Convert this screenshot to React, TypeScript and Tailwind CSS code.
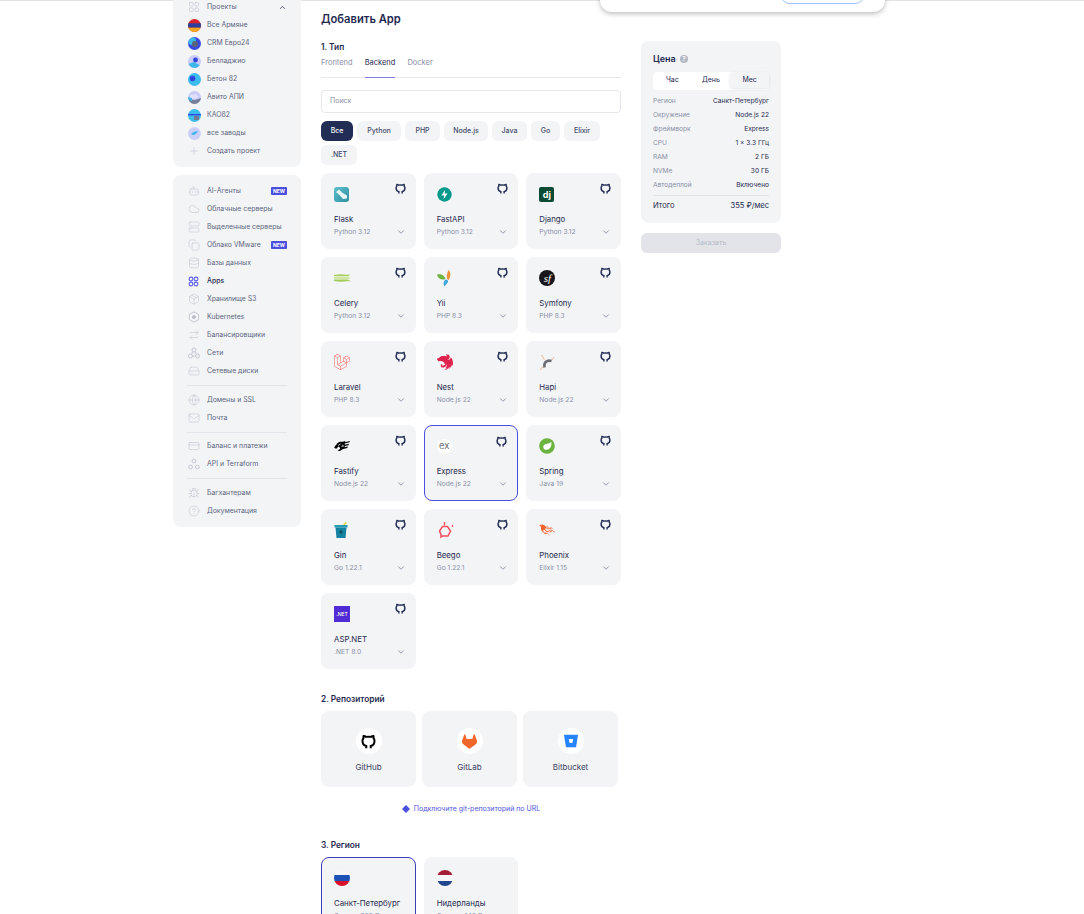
import { ReactNode } from "react";
import {
  Bot,
  ChevronDown,
  ChevronUp,
  Cloud,
  Copy,
  CreditCard,
  Database,
  ArrowRightLeft,
  Globe,
  HardDrive,
  LayoutGrid,
  Mail,
  Package,
  Plus,
  Server,
  Bug,
  CircleHelp,
} from "lucide-react";
import { SiBitbucket, SiFastify, SiGitlab, SiLaravel, SiNestjs, SiPhoenixframework } from "react-icons/si";

function GithubMark({ size, color, className }: { size: number; color: string; className?: string }) {
  return (
    <svg width={size} height={size} viewBox="0 0 12 12" fill="none" stroke={color} strokeWidth="1.6" className={className}>
      <path d="M4.2 11.4V9.5c-.9-.2-3-1-3-4 0-.9.3-1.6.8-2.2-.1-.5-.1-1.2.1-1.8.8 0 1.6.5 2 .8.5-.1 1.2-.2 1.9-.2s1.4.1 1.9.2c.4-.3 1.2-.8 2-.8.2.6.2 1.3.1 1.8.5.6.8 1.3.8 2.2 0 3-2.1 3.8-3 4v1.9" />
    </svg>
  );
}

function Avatar({ bg, children }: { bg: string; children?: ReactNode }) {
  return (
    <svg width="13" height="13" viewBox="0 0 13 13" className="shrink-0">
      <clipPath id={`av-${bg.slice(1)}`}>
        <circle cx="6.5" cy="6.5" r="6.5" />
      </clipPath>
      <g clipPath={`url(#av-${bg.slice(1)})`}>
        <rect width="13" height="13" fill={bg} />
        {children}
      </g>
    </svg>
  );
}

const projects = [
  {
    name: "Все Армяне",
    icon: (
      <Avatar bg="#d9232e">
        <rect y="4.3" width="13" height="4.4" fill="#2b3f9e" />
        <rect y="8.7" width="13" height="4.3" fill="#f2a81d" />
      </Avatar>
    ),
  },
  {
    name: "CRM Евро24",
    icon: (
      <Avatar bg="#3b49e0">
        <circle cx="4" cy="4" r="4" fill="#39b7e8" />
        <circle cx="7" cy="7" r="3" fill="#5b6478" />
      </Avatar>
    ),
  },
  {
    name: "Белладжио",
    icon: (
      <Avatar bg="#c9ccf7">
        <circle cx="7.5" cy="5" r="2.4" fill="#3146e0" />
        <path d="M0 9l6-2 7 4v2H0z" fill="#3fb6ea" />
      </Avatar>
    ),
  },
  {
    name: "Бетон 82",
    icon: (
      <Avatar bg="#3cbcec">
        <circle cx="4.5" cy="5.5" r="2.8" fill="#3146e0" />
      </Avatar>
    ),
  },
  {
    name: "Авито АПИ",
    icon: (
      <Avatar bg="#c9ccf7">
        <path d="M2 4l6-1 3 3-5 2-4 1z" fill="#dfe1fb" />
        <path d="M1 8l6 1 6-2v6H1z" fill="#77809a" />
        <path d="M0 6l4 1v3L0 9z" fill="#3fb6ea" />
      </Avatar>
    ),
  },
  {
    name: "КАО82",
    icon: (
      <Avatar bg="#3cbcec">
        <rect y="5" width="13" height="1.4" fill="#3146e0" />
        <rect x="6" y="7" width="5" height="4" fill="#707a90" />
      </Avatar>
    ),
  },
  {
    name: "все заводы",
    icon: (
      <Avatar bg="#ccd0f8">
        <path d="M3 7c2-2 4-3 7-3-1 2-3 4-5 4z" fill="#3fb6ea" />
      </Avatar>
    ),
  },
];

function AppsIcon() {
  return (
    <svg width="11" height="11" viewBox="0 0 11 11" fill="none" stroke="#5b5fe8" strokeWidth="1.1">
      <circle cx="3" cy="3" r="1.9" />
      <circle cx="8" cy="3" r="1.9" />
      <circle cx="3" cy="8" r="1.9" />
      <circle cx="8" cy="8" r="1.9" />
    </svg>
  );
}

function KubeIcon() {
  return (
    <svg width="12" height="12" viewBox="0 0 12 12" fill="none" stroke="#babec9" strokeWidth="0.8">
      <path d="M6 .8l4.6 2.6v5.2L6 11.2 1.4 8.6V3.4z" />
      <circle cx="6" cy="6" r="1.6" fill="#babec9" />
    </svg>
  );
}

function NetworkIcon() {
  return (
    <svg width="12" height="12" viewBox="0 0 12 12" fill="none" stroke="#babec9" strokeWidth="0.8">
      <circle cx="6" cy="3" r="2" />
      <circle cx="2.5" cy="9" r="2" />
      <circle cx="9.5" cy="9" r="2" />
      <path d="M4.6 9h2.8M5 4.7L3.5 7.3M7 4.7l1.5 2.6" />
    </svg>
  );
}

function TreeIcon() {
  return (
    <svg width="12" height="12" viewBox="0 0 12 12" fill="none" stroke="#babec9" strokeWidth="0.8">
      <circle cx="6" cy="3" r="1.9" />
      <circle cx="2.6" cy="9" r="1.9" />
      <circle cx="9.4" cy="9" r="1.9" />
    </svg>
  );
}

const ic = { size: 12, strokeWidth: 1, color: "#babec9" };

type NavItem = { name: string; icon: ReactNode; isNew?: boolean; active?: boolean };

const servicesTop: NavItem[] = [
  { name: "AI-Агенты", icon: <Bot {...ic} />, isNew: true },
  { name: "Облачные серверы", icon: <Cloud {...ic} /> },
  { name: "Выделенные серверы", icon: <Server {...ic} /> },
  { name: "Облако VMware", icon: <Copy {...ic} />, isNew: true },
  { name: "Базы данных", icon: <Database {...ic} /> },
  { name: "Apps", icon: <AppsIcon />, active: true },
  { name: "Хранилище S3", icon: <Package {...ic} /> },
  { name: "Kubernetes", icon: <KubeIcon /> },
  { name: "Балансировщики", icon: <ArrowRightLeft {...ic} /> },
  { name: "Сети", icon: <NetworkIcon /> },
  { name: "Сетевые диски", icon: <HardDrive {...ic} /> },
];
const servicesDomains: NavItem[] = [
  { name: "Домены и SSL", icon: <Globe {...ic} /> },
  { name: "Почта", icon: <Mail {...ic} /> },
];
const servicesBilling: NavItem[] = [
  { name: "Баланс и платежи", icon: <CreditCard {...ic} /> },
  { name: "API и Terraform", icon: <TreeIcon /> },
];
const servicesHelp: NavItem[] = [
  { name: "Багхантерам", icon: <Bug {...ic} /> },
  { name: "Документация", icon: <CircleHelp {...ic} /> },
];

function NavRow({ icon, children, right }: { icon: ReactNode; children: ReactNode; right?: ReactNode }) {
  return (
    <div className="flex h-[18px] items-center">
      <div className="flex w-[20px] shrink-0 items-center pl-px">{icon}</div>
      <span className="flex-1 truncate">{children}</span>
      {right}
    </div>
  );
}

function ServiceRows({ items }: { items: NavItem[] }) {
  return (
    <>
      {items.map((s) => (
        <NavRow
          key={s.name}
          icon={s.icon}
          right={
            s.isNew ? (
              <span className="rounded-[1px] bg-[#4a4fe0] px-[2px] text-[5px] font-bold leading-[8px] text-white">
                NEW
              </span>
            ) : undefined
          }
        >
          <span className={s.active ? "font-medium text-[#1f2a50]" : ""}>{s.name}</span>
        </NavRow>
      ))}
    </>
  );
}

function Sidebar() {
  return (
    <aside className="-mt-[12px] flex w-[128px] shrink-0 flex-col gap-2 text-[6.9px] text-[#5d6580]">
      <div className="rounded-b-lg bg-[#f3f4f6] px-[14px] pb-[7px] pt-[9px]">
        <NavRow
          icon={<LayoutGrid size={12} strokeWidth={1} color="#babec9" />}
          right={<ChevronUp size={9} strokeWidth={2} color="#2b3252" />}
        >
          Проекты
        </NavRow>
        {projects.map((p) => (
          <NavRow key={p.name} icon={p.icon}>
            {p.name}
          </NavRow>
        ))}
        <NavRow icon={<Plus size={12} strokeWidth={1} color="#babec9" />}>Создать проект</NavRow>
      </div>
      <div className="rounded-lg bg-[#f3f4f6] px-[14px] pb-[7px] pt-[7px]">
        <ServiceRows items={servicesTop} />
        <div className="my-[5px] h-px bg-[#e3e5ea]" />
        <ServiceRows items={servicesDomains} />
        <div className="mb-[4px] mt-[5px] h-px bg-[#e3e5ea]" />
        <ServiceRows items={servicesBilling} />
        <div className="my-[5px] h-px bg-[#e3e5ea]" />
        <ServiceRows items={servicesHelp} />
      </div>
    </aside>
  );
}

function FlaskLogo() {
  return (
    <svg width="15" height="15" viewBox="0 0 15 15">
      <defs>
        <linearGradient id="flask" x1="0" y1="0" x2="1" y2="1">
          <stop offset="0" stopColor="#5cc0cc" />
          <stop offset="1" stopColor="#2f8f9f" />
        </linearGradient>
      </defs>
      <rect width="15" height="15" rx="3" fill="url(#flask)" />
      <path d="M2 5l3-2.5 3 3 5 3v3l-4 .5-3-3.5z" fill="#e8f6f5" />
    </svg>
  );
}

function FastapiLogo() {
  return (
    <svg width="15" height="15" viewBox="0 0 15 15">
      <circle cx="7.5" cy="7.5" r="7.2" fill="#05998b" />
      <path d="M8.2 2.8L4.4 8.4h2.8l-.6 3.8 4-5.8H7.6z" fill="#fff" />
    </svg>
  );
}

function SpringLogo() {
  return (
    <svg width="16" height="16" viewBox="0 0 16 16">
      <circle cx="8" cy="8" r="7.8" fill="#6db33f" />
      <path d="M12.3 3.8c.6 3.6-.6 7.4-4.6 8-2 .2-3.4-.9-3.4-2.8 0-3 3.6-3.3 5.4-3.6 1.1-.2 2-.8 2.6-1.6z" fill="#fff" />
    </svg>
  );
}

function CeleryLogo() {
  return (
    <svg width="17" height="8" viewBox="0 0 17 8">
      <path d="M0 1C4 0 9 .3 13 .8l3-.3-1.5 1.7H0z" fill="#a9d162" />
      <path d="M0 3.2h14.5l2.5.7-2.5.8H0z" fill="#c6e384" />
      <path d="M0 5.5h14l3 2-3-.4C9 8 4 8 0 7z" fill="#a1cb54" />
    </svg>
  );
}

function YiiLogo() {
  return (
    <svg width="16" height="17" viewBox="0 0 16 17">
      <path d="M0 4.5c3.5-1 7.5 0 8.5 4.5-3.5 1.5-7.5 0-8.5-4.5z" fill="#6eb43f" />
      <path d="M11.5 0c2.5 2.5 2.5 6.5 0 10-1.5-.5-3-3.5 0-10z" fill="#f0923b" />
      <path d="M8.5 9.5c2.5 0 3 1.5 2.2 3L7.5 16.5c-1.5-2-1.500-5 1-7z" fill="#40a9dc" />
    </svg>
  );
}

function HapiLogo() {
  return (
    <svg width="17" height="17" viewBox="0 0 17 17" fill="none">
      <path d="M5.500 13.500c-1-5 2.500-8 7-6.500" stroke="#6a6d73" strokeWidth="2.6" />
      <path d="M2.500 1l3 5M1 16l3-3.500M15 3l-2 3" stroke="#e8a77f" strokeWidth="0.8" />
    </svg>
  );
}

function GinLogo() {
  return (
    <svg width="14" height="16" viewBox="0 0 14 16">
      <path d="M8.500 3.500l3-3.500 1.500 1-3 3z" fill="#f0d33c" />
      <path d="M.5 3h13v2.500H.5z" fill="#2a9bb5" />
      <path d="M1.500 5.500h11L11.500 16h-9z" fill="#1583a0" />
      <circle cx="7" cy="10" r="1.700" fill="#0f4f63" />
    </svg>
  );
}

function BeegoLogo() {
  return (
    <svg width="17" height="17" viewBox="0 0 17 17" fill="none" stroke="#f2505f">
      <path d="M5.500 4.500h5l3 4.500-2.500 5H5.500l-1.500 1v-2.500L2.500 9z" strokeWidth="1.500" />
      <path d="M7.500 0v3.500" strokeWidth="1.400" />
      <circle cx="15.500" cy="4" r=".6" fill="#f2505f" />
    </svg>
  );
}

type App = { name: string; ver: string; logo: ReactNode; selected?: boolean };

const apps: App[] = [
  { name: "Flask", ver: "Python 3.12", logo: <FlaskLogo /> },
  { name: "FastAPI", ver: "Python 3.12", logo: <FastapiLogo /> },
  {
    name: "Django",
    ver: "Python 3.12",
    logo: (
      <div className="flex h-[15px] w-[15px] items-center justify-center rounded-[2px] bg-[#0c4b33] text-[9px] font-bold leading-none text-white">
        dj
      </div>
    ),
  },
  { name: "Celery", ver: "Python 3.12", logo: <CeleryLogo /> },
  { name: "Yii", ver: "PHP 8.3", logo: <YiiLogo /> },
  {
    name: "Symfony",
    ver: "PHP 8.3",
    logo: (
      <div className="flex h-4 w-4 items-center justify-center rounded-full bg-[#1a171b] font-['Liberation_Serif',serif] text-[11px] italic leading-none text-white">
        sf
      </div>
    ),
  },
  { name: "Laravel", ver: "PHP 8.3", logo: <SiLaravel size={16} color="#f9605a" /> },
  { name: "Nest", ver: "Node.js 22", logo: <SiNestjs size={16} color="#e0234e" /> },
  { name: "Hapi", ver: "Node.js 22", logo: <HapiLogo /> },
  { name: "Fastify", ver: "Node.js 22", logo: <SiFastify size={16} color="#000" /> },
  {
    name: "Express",
    ver: "Node.js 22",
    selected: true,
    logo: (
      <div className="flex h-[15px] w-[15px] items-center justify-center rounded-full bg-white text-[9.500px] font-light leading-none text-[#444]">
        ex
      </div>
    ),
  },
  { name: "Spring", ver: "Java 19", logo: <SpringLogo /> },
  { name: "Gin", ver: "Go 1.22.1", logo: <GinLogo /> },
  { name: "Beego", ver: "Go 1.22.1", logo: <BeegoLogo /> },
  { name: "Phoenix", ver: "Elixir 1.15", logo: <SiPhoenixframework size={16} color="#f2622c" /> },
  {
    name: "ASP.NET",
    ver: ".NET 8.0",
    logo: (
      <div className="flex h-4 w-4 items-center justify-center bg-[#512bd4] text-[5px] font-medium leading-none text-white">
        .NET
      </div>
    ),
  },
];

function AppCard({ app }: { app: App }) {
  return (
    <div
      className={`relative flex h-[76px] flex-col rounded-lg bg-[#f3f4f6] ${
        app.selected ? "border border-[#4a4fe0] px-[12px]" : "px-[13px]"
      }`}
    >
      <div className={`flex h-4 items-center ${app.selected ? "mt-[12px]" : "mt-[13px]"}`}>{app.logo}</div>
      <div className="mt-[12px] text-[7.800px] leading-[10px] text-[#1f2a50]">{app.name}</div>
      <div className="mt-[3px] flex items-center justify-between text-[6.700px] leading-[10px] text-[#8a90a6]">
        <span>{app.ver}</span>
        <ChevronDown size={10} strokeWidth={1.5} color="#5f6580" className="-mr-[3px]" />
      </div>
      <GithubMark size={11} color="#252e55" className="absolute right-[10px] top-[10px]" />
    </div>
  );
}

function Repo({ name, icon }: { name: string; icon: ReactNode }) {
  return (
    <div className="flex h-[76px] w-[95px] flex-col items-center rounded-lg bg-[#f3f4f6] pt-[17px]">
      <div className="flex h-[26px] w-[26px] items-center justify-center rounded-full bg-white">{icon}</div>
      <div className="mt-[8px] text-[8px] leading-[10px] text-[#3b4360]">{name}</div>
    </div>
  );
}

function Flag({ colors }: { colors: string[] }) {
  return (
    <div className="flex h-4 w-4 flex-col overflow-hidden rounded-full">
      {colors.map((c) => (
        <div key={c} className="flex-1" style={{ background: c }} />
      ))}
    </div>
  );
}

const chips = [
  { label: "Все", w: "w-[32px]" },
  { label: "Python", w: "w-[44px]" },
  { label: "PHP", w: "w-[35px]" },
  { label: "Node.js", w: "w-[44px]" },
  { label: "Java", w: "w-[35px]" },
  { label: "Go", w: "w-[29px]" },
  { label: "Elixir", w: "w-[36px]" },
  { label: ".NET", w: "w-[36px]" },
];

function Main() {
  return (
    <main className="w-[300px] shrink-0">
      <h1 className="mt-[12px] text-[11.200px] font-semibold leading-[12px] text-[#1f2a50]">Добавить App</h1>
      <h2 className="mt-[17px] text-[8.300px] font-semibold leading-[10px] text-[#1f2a50]">1. Тип</h2>
      <div className="mt-[4px] flex h-[22px] gap-3 border-b border-[#e6e7ee] pt-[1px] text-[7.500px] leading-[12px] text-[#8a90a6]">
        <span>Frontend</span>
        <span className="h-[21px] border-b border-[#7c80dd] text-[#1f2a50]">Backend</span>
        <span>Docker</span>
      </div>
      <div className="mt-[12px] flex h-[23px] items-center rounded-[4px] border border-[#e6e7ee] px-2 text-[7px] text-[#8a90a6]">
        Поиск
      </div>
      <div className="mt-2 flex flex-wrap gap-1 text-[7px] font-medium">
        {chips.map((c, i) => (
          <span
            key={c.label}
            className={`flex h-5 items-center justify-center rounded-[6px] ${c.w} ${
              i === 0 ? "bg-[#222d55] text-white" : "bg-[#f3f4f6] text-[#444c6b]"
            }`}
          >
            {c.label}
          </span>
        ))}
      </div>
      <div className="mt-2 grid grid-cols-3 gap-2">
        {apps.map((a) => (
          <AppCard key={a.name} app={a} />
        ))}
      </div>

      <h2 className="mt-[25px] text-[8.300px] font-semibold leading-[10px] text-[#1f2a50]">2. Репозиторий</h2>
      <div className="mt-[7px] flex gap-[6px]">
        <Repo name="GitHub" icon={<GithubMark size={15} color="#000" />} />
        <Repo name="GitLab" icon={<SiGitlab size={15} color="#f1662a" />} />
        <Repo name="Bitbucket" icon={<SiBitbucket size={14} color="#2684ff" />} />
      </div>
      <div className="mt-[17px] flex items-center justify-center gap-[4px] text-[7px] leading-[10px] text-[#5156e0]">
        <svg width="8" height="8" viewBox="0 0 8 8" fill="#4a4fe0">
          <path d="M4 0l4 4-4 4-4-4z" />
        </svg>
        Подключите git-репозиторий по URL
      </div>
      <h2 className="mt-[26px] text-[8.300px] font-semibold leading-[10px] text-[#1f2a50]">3. Регион</h2>
      <div className="mt-[7px] grid grid-cols-3 gap-2">
        <div className="h-[76px] rounded-lg border border-[#3a3fb8] bg-[#f3f4f6] px-[12px] pt-[12px]">
          <Flag colors={["#f6f6f6", "#1c52b8", "#d8102c"]} />
          <div className="mt-[12px] text-[7.800px] leading-[10px] text-[#1f2a50]">Санкт-Петербург</div>
          <div className="mt-[3px] text-[6.700px] leading-[10px] text-[#8a90a6]">Сервер 355 ₽</div>
        </div>
        <div className="h-[76px] rounded-lg bg-[#f3f4f6] px-[13px] pt-[13px]">
          <Flag colors={["#a51d36", "#f6f6f6", "#21468b"]} />
          <div className="mt-[12px] text-[7.800px] leading-[10px] text-[#1f2a50]">Нидерланды</div>
          <div className="mt-[3px] text-[6.700px] leading-[10px] text-[#8a90a6]">Сервер 446 ₽</div>
        </div>
      </div>
    </main>
  );
}

const specs = [
  ["Регион", "Санкт-Петербург"],
  ["Окружение", "Node.js 22"],
  ["Фреймворк", "Express"],
  ["CPU", "1 x 3.3 ГГц"],
  ["RAM", "2 ГБ"],
  ["NVMe", "30 ГБ"],
  ["Автодеплой", "Включено"],
];

function PriceCol() {
  return (
    <div className="mt-[40px] w-[140px] shrink-0">
      <div className="rounded-lg bg-[#f3f4f6] px-[12px] pb-[11px] pt-[12px]">
        <div className="flex h-[12px] items-center gap-[4px] text-[9px] font-semibold text-[#1f2a50]">
          Цена
          <span className="flex h-2 w-2 items-center justify-center rounded-full bg-[#b5b9c6] text-[6px] leading-none text-white">
            ?
          </span>
        </div>
        <div className="mt-[7px] grid h-[18px] grid-cols-3 rounded-[4px] bg-white text-center text-[7px] leading-[16px] text-[#1f2a50]">
          <span>Час</span>
          <span>День</span>
          <span className="h-4 rounded-[4px] bg-[#f3f4f6] shadow-[0_1px_3px_rgba(30,40,80,0.12)]">Мес</span>
        </div>
        <div className="mt-[5px]">
          {specs.map(([k, v]) => (
            <div key={k} className="flex h-[14px] items-center justify-between text-[6.600px]">
              <span className="text-[#8a90a6]">{k}</span>
              <span className="text-[#1f2a50]">{v}</span>
            </div>
          ))}
        </div>
        <div className="mt-[2px] flex justify-between border-t border-[#e3e5ea] pt-[4px] text-[7.600px] leading-[12px] text-[#1f2a50]">
          <span>Итого</span>
          <span>355 ₽/мес</span>
        </div>
      </div>
      <div className="mt-[10px] flex h-5 items-center justify-center rounded-[6px] bg-[#e2e4ea] text-[7px] text-[#b5b9c6]">
        Заказать
      </div>
    </div>
  );
}

export default function App() {
  return (
    <div className="relative h-[914px] w-[1084px] overflow-hidden bg-white font-['Inter',sans-serif]">
      <div className="h-px bg-[#e3e3e3]" />
      <div className="flex gap-5 pl-[173px]">
        <Sidebar />
        <Main />
        <PriceCol />
      </div>
      {/* notification popup, scrolled nearly out of view */}
      <div className="absolute -top-[40px] left-[600px] h-[52px] w-[285px] rounded-b-[12px] bg-white shadow-[0_2px_5px_rgba(0,0,0,0.25)]">
        <div className="absolute bottom-[8px] right-[20px] h-[20px] w-[85px] rounded-full border border-[#9cc0f8]" />
      </div>
    </div>
  );
}
